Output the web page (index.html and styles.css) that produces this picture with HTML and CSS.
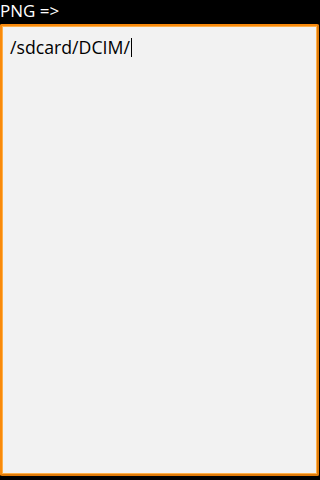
FILE: index.html
```html
<!DOCTYPE html>
<html>
<head>
<meta charset="utf-8">
<link rel="stylesheet" href="styles.css">
</head>
<body>
<div class="title">PNG =&gt;</div>
<div class="field">
  <div class="text">/sdcard/DCIM/<span class="cursor"></span></div>
</div>
</body>
</html>
```
FILE: styles.css
```css
html, body {
  margin: 0;
  padding: 0;
  width: 320px;
  height: 480px;
  background: #000;
  overflow: hidden;
}
body {
  display: flex;
  flex-direction: column;
  font-family: "Open Sans", "DejaVu Sans", sans-serif;
}
.title {
  height: 24px;
  line-height: 22px;
  color: #fff;
  font-size: 17px;
  white-space: nowrap;
}
.field {
  height: 452px;
  width: 319px;
  box-sizing: border-box;
  border: 2px solid #f98a0c;
  border-right-color: #e07a08;
  border-bottom-color: #e07a08;
  box-shadow: inset 0 0 0 1px #ffb04a;
  border-radius: 2px;
  background: #f2f2f2;
  padding: 8px 0 0 8px;
}
.text {
  font-size: 17.7px;
  color: #000;
  line-height: 26px;
  display: flex;
  align-items: center;
  white-space: nowrap;
}
.cursor {
  display: inline-block;
  width: 1px;
  height: 19px;
  background: #000;
  margin-left: 1px;
}
```
